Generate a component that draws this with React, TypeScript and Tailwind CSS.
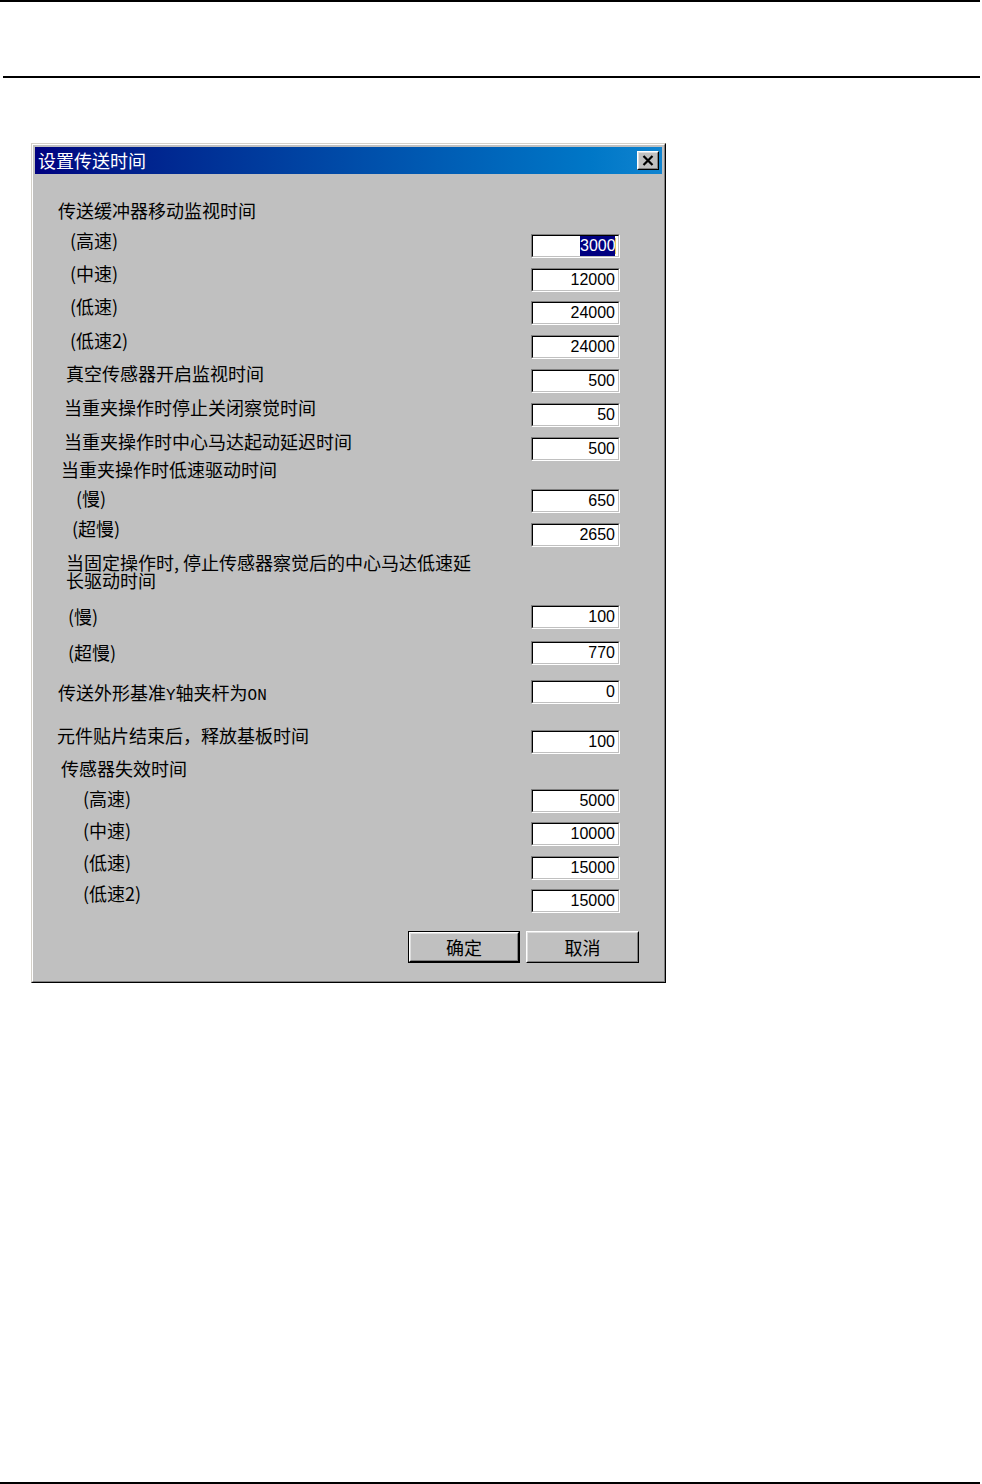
import React from "react";

type Row = {
  label: React.ReactNode;
  row: string;
  pad: string;
  lt: string;
  bt: string;
  value?: string;
  selected?: boolean;
};

const rows: Row[] = [
  { label: "传送缓冲器移动监视时间", row: "h-[30px]", pad: "pl-[23px]", lt: "-mt-[2px]", bt: "mt-0" },
  { label: "(高速)", row: "h-[33px]", pad: "pl-[35px]", lt: "-mt-[2px]", bt: "mt-[1px]", value: "3000", selected: true },
  { label: "(中速)", row: "h-[33px]", pad: "pl-[35px]", lt: "-mt-[2px]", bt: "mt-[2px]", value: "12000" },
  { label: "(低速)", row: "h-[34px]", pad: "pl-[35px]", lt: "-mt-[2px]", bt: "mt-[2px]", value: "24000" },
  { label: "(低速2)", row: "h-[33px]", pad: "pl-[35px]", lt: "-mt-[2px]", bt: "mt-[2px]", value: "24000" },
  { label: "真空传感器开启监视时间", row: "h-[34px]", pad: "pl-[31px]", lt: "-mt-[2px]", bt: "mt-[3px]", value: "500" },
  { label: "当重夹操作时停止关闭察觉时间", row: "h-[34px]", pad: "pl-[29px]", lt: "-mt-[2px]", bt: "mt-[3px]", value: "50" },
  { label: "当重夹操作时中心马达起动延迟时间", row: "h-[28px]", pad: "pl-[29px]", lt: "-mt-[2px]", bt: "mt-[3px]", value: "500" },
  { label: "当重夹操作时低速驱动时间", row: "h-[27px]", pad: "pl-[26px]", lt: "-mt-[2px]", bt: "mt-0" },
  { label: "(慢)", row: "h-[32px]", pad: "pl-[41px]", lt: "mt-0", bt: "mt-0", value: "650" },
  { label: "(超慢)", row: "h-[34px]", pad: "pl-[37px]", lt: "-mt-[2px]", bt: "mt-[2px]", value: "2650" },
  {
    label: (
      <span className="block leading-[18px]">
        当固定操作时, 停止传感器察觉后的中心马达低速延
        <br />
        长驱动时间
      </span>
    ),
    row: "h-[50px]",
    pad: "pl-[31px]",
    lt: "-mt-[2px]",
    bt: "mt-0",
  },
  { label: "(慢)", row: "h-[36px]", pad: "pl-[33px]", lt: "mt-[2px]", bt: "mt-0", value: "100" },
  { label: "(超慢)", row: "h-[39px]", pad: "pl-[33px]", lt: "mt-[2px]", bt: "mt-0", value: "770" },
  {
    label: (
      <>
        传送外形基准<span className="font-['Liberation_Mono',monospace] text-[16px]">Y</span>轴夹杆为
        <span className="font-['Liberation_Mono',monospace] text-[16px]">ON</span>
      </>
    ),
    row: "h-[48px]",
    pad: "pl-[23px]",
    lt: "mt-[3px]",
    bt: "mt-0",
    value: "0",
  },
  { label: "元件贴片结束后，释放基板时间", row: "h-[33px]", pad: "pl-[22px]", lt: "-mt-[2px]", bt: "mt-[2px]", value: "100" },
  { label: "传感器失效时间", row: "h-[28px]", pad: "pl-[26px]", lt: "-mt-[2px]", bt: "mt-0" },
  { label: "(高速)", row: "h-[33px]", pad: "pl-[48px]", lt: "mt-0", bt: "mt-0", value: "5000" },
  { label: "(中速)", row: "h-[33px]", pad: "pl-[48px]", lt: "-mt-[1px]", bt: "mt-0", value: "10000" },
  { label: "(低速)", row: "h-[31px]", pad: "pl-[48px]", lt: "-mt-[2px]", bt: "mt-[1px]", value: "15000" },
  { label: "(低速2)", row: "h-[45px]", pad: "pl-[48px]", lt: "-mt-[2px]", bt: "mt-[3px]", value: "15000" },
];

function EditBox({ value, selected }: { value: string; selected?: boolean }) {
  return (
    <div className="w-[89px] h-[24px] border border-t-[#808080] border-l-[#808080] border-b-white border-r-white">
      <div className="h-full border border-t-black border-l-black border-b-[#c0c0c0] border-r-[#c0c0c0] bg-white flex items-center justify-end pr-[2px] font-['Liberation_Sans',sans-serif] text-[16px] leading-[20px] text-black">
        {selected ? (
          <>
            <span className="block w-[35px] overflow-hidden whitespace-nowrap bg-[#000080] text-white">
              {value}
            </span>
            <span className="block w-[1px] h-[16px] bg-[#e0d060]" />
          </>
        ) : (
          <span className="pr-[1px]">{value}</span>
        )}
      </div>
    </div>
  );
}

function RaisedButton({ label, isDefault }: { label: string; isDefault?: boolean }) {
  const face = (
    <div className="h-full border border-t-white border-l-white border-b-black border-r-black">
      <div className="h-full border border-t-[#dfdfdf] border-l-[#dfdfdf] border-b-[#808080] border-r-[#808080] bg-[#c0c0c0] flex items-center justify-center text-[18px] leading-[18px] text-black">
        {label}
      </div>
    </div>
  );
  return isDefault ? (
    <div className="w-[112px] h-[32px] border border-black">{face}</div>
  ) : (
    <div className="w-[113px] h-[32px]">{face}</div>
  );
}

function CloseIcon() {
  return (
    <svg width="12" height="11" viewBox="0 0 12 11">
      <path d="M1.5 1 L10.5 10 M10.5 1 L1.5 10" stroke="black" strokeWidth="2.2" />
    </svg>
  );
}

export default function App() {
  return (
    <div className="w-[982px] h-[1484px] bg-white flex flex-col font-['Noto_Sans_CJK_SC','Liberation_Sans',sans-serif]">
      <div className="w-[980px] h-[2px] bg-black" />
      <div className="mt-[74px] ml-[3px] w-[977px] h-[2px] bg-black" />

      {/* dialog window */}
      <div className="mt-[65px] ml-[31px] w-[635px] h-[840px] border border-t-[#d4d0c8] border-l-[#d4d0c8] border-b-black border-r-black">
        <div className="h-full border border-t-white border-l-white border-b-[#808080] border-r-[#808080] bg-[#c0c0c0] p-[2px] flex flex-col">
          <div className="h-[27px] bg-gradient-to-r from-[#000080] to-[#1084d0] flex items-center justify-between pl-[3px] pr-[3px]">
            <span className="text-white text-[18px] leading-[18px] -mt-[2px]">设置传送时间</span>
            <div className="w-[22px] h-[19px] border border-t-white border-l-white border-b-black border-r-black">
              <div className="h-full border border-t-[#dfdfdf] border-l-[#dfdfdf] border-b-[#808080] border-r-[#808080] bg-[#c0c0c0] flex items-center justify-center">
                <CloseIcon />
              </div>
            </div>
          </div>

          <div className="pt-[29px] flex flex-col text-black text-[18px] leading-[18px]">
            {rows.map((r, i) => (
              <div key={i} className={`flex items-start ${r.row}`}>
                <div className={`w-[496px] whitespace-nowrap ${r.pad} ${r.lt}`}>{r.label}</div>
                {r.value !== undefined && (
                  <div className={r.bt}>
                    <EditBox value={r.value} selected={r.selected} />
                  </div>
                )}
              </div>
            ))}
            <div className="flex gap-[6px] pl-[373px]">
              <RaisedButton label="确定" isDefault />
              <RaisedButton label="取消" />
            </div>
          </div>
        </div>
      </div>

      <div className="mt-auto w-[980px] h-[2px] bg-black" />
    </div>
  );
}
